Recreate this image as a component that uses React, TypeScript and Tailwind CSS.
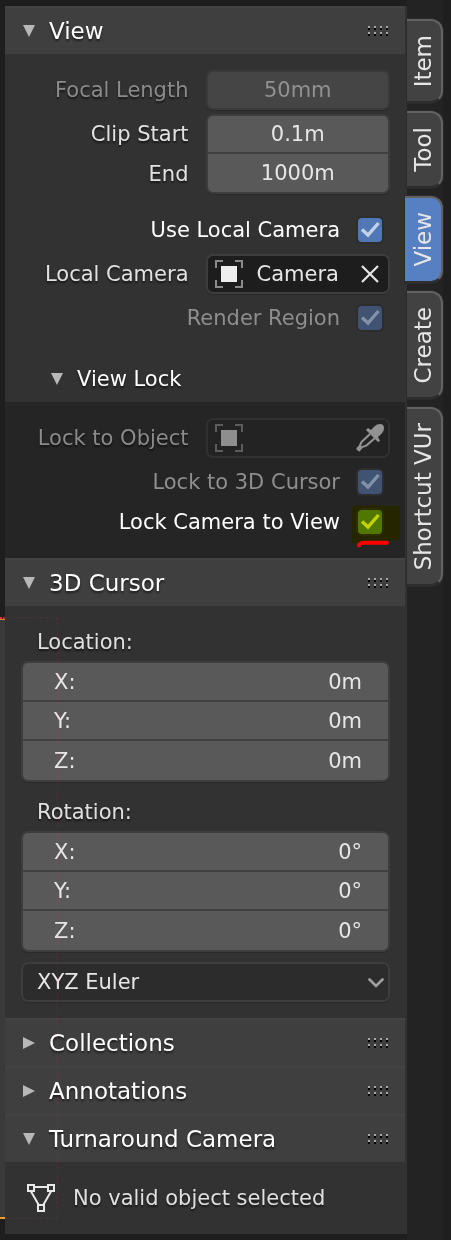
import { useState, type ReactNode } from "react";

const shadow = "[text-shadow:0_2px_2px_rgba(0,0,0,0.55)]";

function Triangle({ open }: { open: boolean }) {
  return (
    <svg width="12" height="12" viewBox="0 0 12 12" className="shrink-0" aria-hidden="true">
      <path d={open ? "M0 0H12L6 12Z" : "M0 0V12L12 6Z"} fill="#b8b8b8" />
    </svg>
  );
}

function Grip() {
  return (
    <svg width="20" height="10" viewBox="0 0 20 10" shapeRendering="crispEdges" aria-hidden="true">
      {[0, 6, 12, 18].map((x) => (
        <g key={x}>
          <rect x={x} y="0" width="2" height="2" fill="#a8a8a8" />
          <rect x={x} y="2" width="2" height="2" fill="#000" />
          <rect x={x} y="6" width="2" height="2" fill="#a8a8a8" />
          <rect x={x} y="8" width="2" height="2" fill="#000" />
        </g>
      ))}
    </svg>
  );
}

function PanelHeader({ title, open = false }: { title: string; open?: boolean }) {
  return (
    <h2 className="pr-[2px]">
      <button
        type="button"
        aria-expanded={open}
        className="flex h-12 w-full items-center gap-[14px] border-t-2 border-[#434343] bg-[#3f3f3f] pl-[18px] pr-[17px] text-left"
      >
        <Triangle open={open} />
        <span className={`grow text-[23px] leading-7 text-white ${shadow}`}>{title}</span>
        <Grip />
      </button>
    </h2>
  );
}

function Check({
  label,
  disabled = false,
  strong = false,
  highlighted = false,
}: {
  label: string;
  disabled?: boolean;
  strong?: boolean;
  highlighted?: boolean;
}) {
  const [on, setOn] = useState(true);
  return (
    <label className="flex h-10 items-center justify-end gap-[18px] pr-2">
      <span className={strong ? "text-white" : "text-[#8e8e8e]"}>{label}</span>
      <span className="relative flex size-6">
        <input
          type="checkbox"
          checked={on}
          disabled={disabled}
          onChange={(e) => setOn(e.target.checked)}
          className="size-6 appearance-none rounded-[4px] bg-[#545454] shadow-[0_0_0_2px_#2d2d2d] checked:bg-[#5078b5] disabled:checked:bg-[#415373]"
        />
        {on && (
          <svg viewBox="0 0 24 24" className="pointer-events-none absolute inset-0" fill="none" aria-hidden="true">
            <path d="M4 11.500L10 17L20.500 5" stroke={disabled ? "#8391a8" : "#c5d2e6"} strokeWidth="3.400" />
          </svg>
        )}
        {highlighted && (
          <>
            <svg
              viewBox="0 0 48 38"
              className="pointer-events-none absolute -left-[6px] -top-[5px] h-[38px] w-12 max-w-none mix-blend-multiply"
              aria-hidden="true"
            >
              <path d="M0 1L19 0L38 1H48V35H40V36H12V38H0Z" fill="#ff0" />
            </svg>
            <svg
              viewBox="0 0 34 8"
              className="pointer-events-none absolute -left-[2px] top-[30px] h-2 w-[34px] max-w-none"
              fill="none"
              aria-hidden="true"
            >
              <path d="M3 5.500C3 4 4 3 8 2.700H31" stroke="#fe0000" strokeWidth="4" strokeLinecap="round" />
            </svg>
          </>
        )}
      </span>
    </label>
  );
}

function ObjectIcon({ dim = false }: { dim?: boolean }) {
  return (
    <svg width="28" height="28" viewBox="0 0 28 28" fill="none" className="shrink-0" aria-hidden="true">
      <path
        d="M1 8V1H8M20 1H27V8M27 20V27H20M8 27H1V20"
        stroke={dim ? "#5c5c5c" : "#8b8b8b"}
        strokeWidth="2"
      />
      <rect x="6" y="6" width="16" height="16" fill={dim ? "#8e8e8e" : "#eee"} />
    </svg>
  );
}

function Row({ label, htmlFor, dim = false, children }: { label: string; htmlFor: string; dim?: boolean; children: ReactNode }) {
  return (
    <div className="grid grid-cols-2 items-center">
      <label htmlFor={htmlFor} className={`pr-[17px] text-right ${shadow} ${dim ? "text-[#8b8b8b]" : "text-[#e2e2e2]"}`}>
        {label}
      </label>
      {children}
    </div>
  );
}

function Vector({ title, unit }: { title: string; unit: string }) {
  return (
    <fieldset>
      <legend className={`flex h-[39px] items-center pl-4 text-[#e0e0e0] ${shadow}`}>{title}</legend>
      <div className="divide-y-2 divide-[#404040] overflow-hidden rounded-[7px] border-2 border-[#3d3d3d] bg-[#595959] shadow-[0_1px_0_#2a2a2a]">
        {["X:", "Y:", "Z:"].map((axis) => (
          <label key={axis} className="flex h-[39px] items-center pl-[31px] pr-[26px] text-[#e6e6e6]">
            <span>{axis}</span>
            <input defaultValue={unit} className="w-0 grow bg-transparent text-right outline-none" />
          </label>
        ))}
      </div>
    </fieldset>
  );
}

const tabs = ["Item", "Tool", "View", "Create", "Shortcut VUr"];

function Tabs() {
  const [active, setActive] = useState("View");
  return (
    <div role="tablist" aria-orientation="vertical" className="flex w-11 shrink-0 flex-col items-start gap-2 border-r-8 border-[#1f1f1f] bg-[#232323] pt-[19px]">
      {tabs.map((tab) => (
        <button
          key={tab}
          type="button"
          role="tab"
          aria-selected={tab === active}
          onClick={() => setActive(tab)}
          className={`flex items-center justify-end rounded-r-[12px] border-y-2 border-r-2 border-b-[#2e2e2e] border-t-[#626262] border-r-[#626262] py-[14px] pr-1 text-[23px] shadow-[0_0_0_1px_#2b2b2b] ${
            tab === active ? "-ml-[2px] w-[38px] bg-[#5680c2]" : "w-[36px] bg-[#424242]"
          }`}
        >
          <span className="rotate-180 text-[#e6e6e6] [writing-mode:vertical-rl]">{tab}</span>
        </button>
      ))}
    </div>
  );
}

export default function App() {
  return (
    <div className="relative flex min-h-screen bg-[#1e1e1e] font-['DejaVu_Sans',sans-serif] text-[21px] leading-7">
      <div className="flex w-[5px] shrink-0 flex-col pt-[617px]">
        <div className="border-t-2 border-dotted border-[#e02c3c]" />
        <div className="h-[598px] border-t border-[#d09030] bg-[#3a3a3a]" />
        <div className="h-[2px] bg-[#ffa028]" />
      </div>

      <main className="min-w-0 grow pt-[6px]">
        <div className="bg-[#323232]">
          <section>
            <PanelHeader title="View" open />
            <div className="flex flex-col gap-1 pl-4 pr-[17px] pt-4">
              <Row label="Focal Length" htmlFor="focal" dim>
                <input
                  id="focal"
                  disabled
                  defaultValue="50mm"
                  className="h-10 w-full rounded-[7px] border-2 border-[#3a3a3a] bg-[#454545] text-center text-[#919191] shadow-[0_1px_0_#2a2a2a]"
                />
              </Row>
              <div className="grid grid-cols-2">
                <div className={`flex flex-col pr-[17px] text-right text-[#e2e2e2] ${shadow}`}>
                  <label htmlFor="clip-start" className="h-10 leading-10">Clip Start</label>
                  <label htmlFor="clip-end" className="h-10 leading-10">End</label>
                </div>
                <div className="flex flex-col divide-y-2 divide-[#404040] overflow-hidden rounded-[7px] border-2 border-[#3d3d3d] bg-[#595959] shadow-[0_1px_0_#2a2a2a]">
                  <input id="clip-start" defaultValue="0.1m" className="h-[38px] w-full text-center text-[#e6e6e6]" />
                  <input id="clip-end" defaultValue="1000m" className="h-[38px] w-full text-center text-[#e6e6e6]" />
                </div>
              </div>
              <div className="pt-3">
                <Check label="Use Local Camera" strong />
              </div>
              <Row label="Local Camera" htmlFor="local-camera">
                <div className="flex h-10 items-center rounded-[7px] border-2 border-[#3d3d3d] bg-[#1d1d1d] pl-[7px] pr-2 shadow-[0_1px_0_#2a2a2a]">
                  <ObjectIcon />
                  <input id="local-camera" defaultValue="Camera" className="ml-[14px] w-0 grow bg-transparent text-[#e6e6e6] outline-none" />
                  <button type="button" aria-label="Clear camera">
                    <svg width="20" height="20" viewBox="0 0 20 20" fill="none" aria-hidden="true">
                      <path d="M2 2L18 18M18 2L2 18" stroke="#e6e6e6" strokeWidth="2.2" />
                    </svg>
                  </button>
                </div>
              </Row>
              <Check label="Render Region" disabled />
            </div>
            <h3 className="pt-[18px]">
              <button type="button" aria-expanded="true" className="flex h-[46px] w-full items-center gap-[14px] pl-[46px] text-left">
                <Triangle open />
                <span className={`text-white ${shadow}`}>View Lock</span>
              </button>
            </h3>
            <div className="mr-[2px] bg-[#252525] pb-4 pl-4 pr-[15px] pt-4">
              <div className="pb-1">
                <Row label="Lock to Object" htmlFor="lock-object" dim>
                  <div className="flex h-10 items-center rounded-[7px] border-2 border-[#313131] bg-[#232323] pl-[7px] pr-1">
                    <ObjectIcon dim />
                    <input id="lock-object" disabled className="w-0 grow bg-transparent" />
                    <button type="button" aria-label="Pick object">
                      <svg width="28" height="28" viewBox="0 0 28 28" fill="none" aria-hidden="true">
                        <path d="M15 6C18 3 20 0 24 0C27 0 28 2 28 4C28 8 25 10 22 13L24 17L22 18L10 6L12 4Z" fill="#929292" />
                        <path
                          d="M14 10L6 17.500C4 19.500 5 21 3.500 22.500L1 25M19 14L11 21C9 23 7 22 5.500 23.500L2.500 27"
                          stroke="#929292"
                          strokeWidth="2.200"
                        />
                        <path d="M1 26L5 22" stroke="#929292" strokeWidth="2" />
                      </svg>
                    </button>
                  </div>
                </Row>
              </div>
              <Check label="Lock to 3D Cursor" disabled />
              <Check label="Lock Camera to View" strong highlighted />
            </div>
          </section>

          <section>
            <PanelHeader title="3D Cursor" open />
            <div className="flex flex-col gap-[10px] pb-4 pl-4 pr-[17px] pt-4">
              <Vector title="Location:" unit="0m" />
              <Vector title="Rotation:" unit="0°" />
              <div className="relative">
                <select
                  aria-label="Rotation mode"
                  className="h-10 w-full appearance-none rounded-[7px] border-2 border-[#3d3d3d] bg-[#2c2c2c] pl-[14px] text-[#e6e6e6] shadow-[0_1px_0_#2a2a2a]"
                >
                  <option>XYZ Euler</option>
                </select>
                <svg viewBox="0 0 16 10" className="pointer-events-none absolute right-[6px] top-4 h-[10px] w-4" fill="none" aria-hidden="true">
                  <path d="M1.500 1.500L8 8L14.500 1.500" stroke="#a0a0a0" strokeWidth="2.600" strokeLinecap="round" />
                </svg>
              </div>
            </div>
          </section>

          <PanelHeader title="Collections" />
          <PanelHeader title="Annotations" />
          <section>
            <PanelHeader title="Turnaround Camera" open />
            <p className={`flex h-[72px] items-center gap-[18px] pl-[22px] text-[#e0e0e0] ${shadow}`}>
              <svg width="28" height="28" viewBox="0 0 28 28" fill="none" stroke="#e8e8e8" strokeWidth="2" aria-hidden="true">
                <rect x="1" y="1" width="6" height="6" />
                <rect x="21" y="1" width="6" height="6" />
                <rect x="11" y="21" width="6" height="6" />
                <path d="M7 3H21M4 7.500L11.500 20.500M24 7.500L16.500 20.500" />
              </svg>
              <span>No valid object selected</span>
            </p>
          </section>
        </div>
      </main>

      <Tabs />

      <div className="pointer-events-none absolute left-0 top-[617px] h-[602px] w-[58px] border-y border-r border-dashed border-[#e06060]/10" />
    </div>
  );
}
